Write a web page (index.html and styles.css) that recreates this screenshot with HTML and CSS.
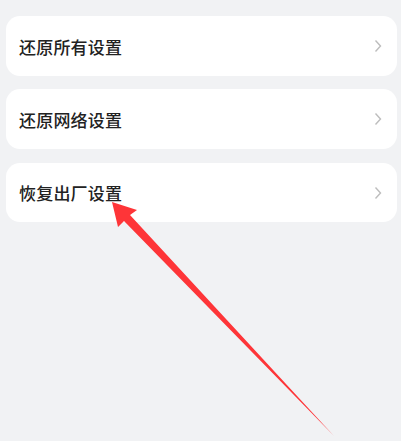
FILE: index.html
```html
<!DOCTYPE html>
<html>

<head>
  <meta charset="utf-8" />
  <meta name="viewport" content="width=device-width, initial-scale=1" />
  <title>重置</title>
  <link rel="stylesheet" href="styles.css">
</head>

<body>
  <div class="list">
    <div class="item">
      <span class="label">还原所有设置</span>
      <svg class="chevron" width="8" height="14" viewBox="0 0 8 14"><path d="M1.5 1.5 L6.5 7 L1.5 12.5" /></svg>
    </div>
    <div class="item">
      <span class="label">还原网络设置</span>
      <svg class="chevron" width="8" height="14" viewBox="0 0 8 14"><path d="M1.5 1.5 L6.5 7 L1.5 12.5" /></svg>
    </div>
    <div class="item">
      <span class="label">恢复出厂设置</span>
      <svg class="chevron" width="8" height="14" viewBox="0 0 8 14"><path d="M1.5 1.5 L6.5 7 L1.5 12.5" /></svg>
    </div>
  </div>

  <svg class="arrow" width="401" height="441" viewBox="0 0 401 441">
    <polygon points="112,202 137,210 130,215 334,436 124,221 118,227" />
  </svg>
</body>

</html>
```

FILE: styles.css
```css
body {
  margin: 0;
  padding: 0;
  background-color: #f1f2f4;
  font-family: "Noto Sans CJK SC", "Noto Sans", sans-serif;
  color: #222;
  height: 441px;
  overflow: hidden;
  position: relative;
}

.list {
  display: flex;
  flex-direction: column;
  gap: 13px;
  padding: 16px 4px 0 6px;
}

.item {
  display: flex;
  align-items: center;
  justify-content: space-between;
  height: 60px;
  padding: 0 15px 0 13px;
  background: #ffffff;
  border-radius: 14px;
}

.item:last-child {
  margin-top: 1px;
  height: 59px;
}

.label {
  font-size: 17px;
  font-weight: 500;
  letter-spacing: 0.2px;
}

.chevron {
  fill: none;
  stroke: #bdbdbd;
  stroke-width: 1.4;
}

.arrow {
  position: absolute;
  left: 0;
  top: 0;
}

.arrow polygon {
  fill: #fe3538;
}
```
